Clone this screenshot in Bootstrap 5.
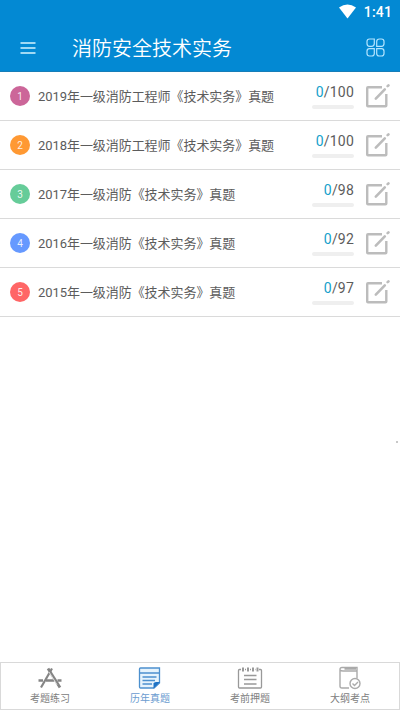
<!DOCTYPE html>
<html lang="zh-CN">
<head>
<meta charset="utf-8">
<meta name="viewport" content="width=device-width, initial-scale=1">
<title>消防安全技术实务</title>
<link href="https://cdn.jsdelivr.net/npm/bootstrap@5.3.0/dist/css/bootstrap.min.css" rel="stylesheet">
<style>
body{font-family:Roboto,"Noto Sans CJK SC",sans-serif;color:#5c5c5c;overflow:hidden}
.topbar{height:72px;background:#0389d3;border-bottom:1px solid #177eb8}
.status{height:24px;font-size:14px;line-height:24px;padding-right:8px;gap:8px;font-weight:500;letter-spacing:.15px}
.status svg{margin-bottom:1px}
.appbar{height:47px;padding:0 15px 0 20px}
.page-title{font-size:20px;line-height:30px;margin-left:36px;padding-top:3px;font-weight:350}
.exam{height:49px;border-bottom:1px solid #dadada;padding:0 9px 0 10px}
.num{width:20px;height:20px;font-size:10px;color:#ffffffe0;padding-top:1px}
.n1{background:#cc6699}.n2{background:#ff9933}.n3{background:#66cc99}.n4{background:#6699ff}.n5{background:#ff6666}
.exam-name{font-size:13px;line-height:20px;margin-left:8px;padding-top:2px;letter-spacing:-.06px}
.score{width:42px;margin-right:11px;padding-top:10px}
.score-text{font-size:14px;line-height:21px;letter-spacing:.2px;white-space:nowrap}
.done{color:#149fcb}
.track{height:4px;background:#efefef;border-radius:2px;margin-top:2px}
.tabs{height:48px;box-shadow:inset 0 0 0 1px #d9d9d9}
.tab{font-size:10px;line-height:14px;color:#808080;padding-top:4px}
.tab svg{margin-bottom:1px}
.tab.active{color:#6a9bcf}
.speck{right:2px;top:441px;width:2px;height:2px;background:#c8c8c8}
</style>
<script src="https://cdn.jsdelivr.net/npm/bootstrap@5.3.0/dist/js/bootstrap.bundle.min.js"></script>
</head>
<body class="vh-100 d-flex flex-column bg-white position-relative">
<svg class="d-none">
 <symbol id="edit" viewBox="0 0 26 26"><g fill="none" stroke="#bcbcbc"><path stroke-width="2.400" stroke-linejoin="round" d="M17 4.200H3Q2.200 4.200 2.200 5V22.500Q2.200 23.300 3 23.300H20.500Q21.300 23.300 21.300 22.500V11"/><path stroke-width="2.600" stroke-linecap="round" d="M10.800 15.600L19.800 6.400M22.600 3.200L23.500 2.300"/></g></symbol>
</svg>
<header class="topbar text-white flex-shrink-0">
 <div class="status d-flex justify-content-end align-items-center">
  <svg width="17" height="15" viewBox="0 0 17 15"><path fill="#fff" d="M0 3.500Q8.500-2.500 17 3.500L8.500 14.500Z"/></svg><span>1:41</span>
 </div>
 <div class="appbar d-flex align-items-center">
  <svg width="16" height="12" viewBox="0 0 16 12"><path stroke="#d5f4ff" stroke-width="1.500" d="M.5 1H15.500M.5 6H15.500M.5 11H15.500"/></svg>
  <h1 class="page-title mb-0">消防安全技术实务</h1>
  <svg class="ms-auto" width="19" height="19" viewBox="0 0 19 19" fill="none" stroke="#b5e5ff" stroke-width="1.200"><path d="M3.500 1H8.300V5.500Q8.300 8.300 5.500 8.300H3.500Q1 8.300 1 5.500V3.500Q1 1 3.500 1ZM15.500 1H13.500Q10.700 1 10.700 3.500V8.300H15.500Q18 8.300 18 5.800V3.500Q18 1 15.500 1ZM3.500 10.700H8.300V15.500Q8.300 18 5.800 18H3.500Q1 18 1 15.500V13.200Q1 10.700 3.500 10.700ZM10.700 10.700H15.500Q18 10.700 18 13.200V15.500Q18 18 15.500 18H13.200Q10.700 18 10.700 15.500Z"/></svg>
 </div>
</header>
<main class="flex-grow-1">
 <div class="exam d-flex align-items-center"><span class="num n1 rounded-circle d-flex align-items-center justify-content-center">1</span><span class="exam-name">2019年一级消防工程师《技术实务》真题</span><div class="score ms-auto align-self-start text-end"><div class="score-text"><span class="done">0</span>/100</div><div class="track"></div></div><svg width="26" height="26"><use href="#edit"/></svg></div>
 <div class="exam d-flex align-items-center"><span class="num n2 rounded-circle d-flex align-items-center justify-content-center">2</span><span class="exam-name">2018年一级消防工程师《技术实务》真题</span><div class="score ms-auto align-self-start text-end"><div class="score-text"><span class="done">0</span>/100</div><div class="track"></div></div><svg width="26" height="26"><use href="#edit"/></svg></div>
 <div class="exam d-flex align-items-center"><span class="num n3 rounded-circle d-flex align-items-center justify-content-center">3</span><span class="exam-name">2017年一级消防《技术实务》真题</span><div class="score ms-auto align-self-start text-end"><div class="score-text"><span class="done">0</span>/98</div><div class="track"></div></div><svg width="26" height="26"><use href="#edit"/></svg></div>
 <div class="exam d-flex align-items-center"><span class="num n4 rounded-circle d-flex align-items-center justify-content-center">4</span><span class="exam-name">2016年一级消防《技术实务》真题</span><div class="score ms-auto align-self-start text-end"><div class="score-text"><span class="done">0</span>/92</div><div class="track"></div></div><svg width="26" height="26"><use href="#edit"/></svg></div>
 <div class="exam d-flex align-items-center"><span class="num n5 rounded-circle d-flex align-items-center justify-content-center">5</span><span class="exam-name">2015年一级消防《技术实务》真题</span><div class="score ms-auto align-self-start text-end"><div class="score-text"><span class="done">0</span>/97</div><div class="track"></div></div><svg width="26" height="26"><use href="#edit"/></svg></div>
</main>
<div class="speck position-absolute"></div>
<nav class="tabs d-flex flex-shrink-0">
 <div class="tab col-3 d-flex flex-column align-items-center">
  <svg width="26" height="25" viewBox="0 0 26 25" fill="none" stroke="#858585"><path stroke-width="2.600" d="M1.500 14.500H6M9 14.500H17M20.500 14.500H24.500"/><path stroke-width="2.800" d="M11 2.500L23 21.500"/><path stroke-width="2.200" d="M15 2.500L4 21.500"/><path stroke="#fff" stroke-width=".7" d="M12 6L20 18.700"/></svg><span>考题练习</span>
 </div>
 <div class="tab active col-3 d-flex flex-column align-items-center">
  <svg width="26" height="25" viewBox="0 0 26 25" fill="none"><path fill="#e6f3fc" stroke="#4c90ce" stroke-width="1.300" d="M3.500 2H22.500V17L17 22H3.500Q2.500 22 2.500 21V3Q2.500 2 3.500 2Z"/><path stroke="#4c90ce" stroke-width="1.400" d="M3 7H23M5.500 11H19.500M5.500 14.500H18M5.500 18H15"/><path fill="#1e73c6" d="M16.500 22.500V17.500Q17 16 19 16H23Z"/></svg><span>历年真题</span>
 </div>
 <div class="tab col-3 d-flex flex-column align-items-center">
  <svg width="26" height="25" viewBox="0 0 26 25" fill="none" stroke="#999" stroke-width="1.300"><path d="M4 3.500H2.500Q1.500 3.500 1.500 4.500V21Q1.500 22 2.500 22H23.500Q24.500 22 24.500 21V4.500Q24.500 3.500 23.500 3.500H22M8 3.500H9M13 3.500H14M18 3.500H18.500M7 9.500H19.500M7 13.500H19.500M7 18H19.500"/><path stroke-width="2" d="M6 1.500V5.500M11 1.500V5.500M16 1.500V5.500M20.500 1.500V5.500"/></svg><span>考前押题</span>
 </div>
 <div class="tab col-3 d-flex flex-column align-items-center">
  <svg width="26" height="25" viewBox="0 0 26 25" fill="none" stroke="#aaa" stroke-width="1.400"><path d="M12 22H5Q3 22 3 20V3.500Q3 1.500 5 1.500H20V12.500M3 4Q4 5 6 5H20M7.500 3H19"/><circle cx="18" cy="17.500" r="5"/><path d="M15.500 17.500L17.500 19.500L21 16"/></svg><span>大纲考点</span>
 </div>
</nav>
</body>
</html>
